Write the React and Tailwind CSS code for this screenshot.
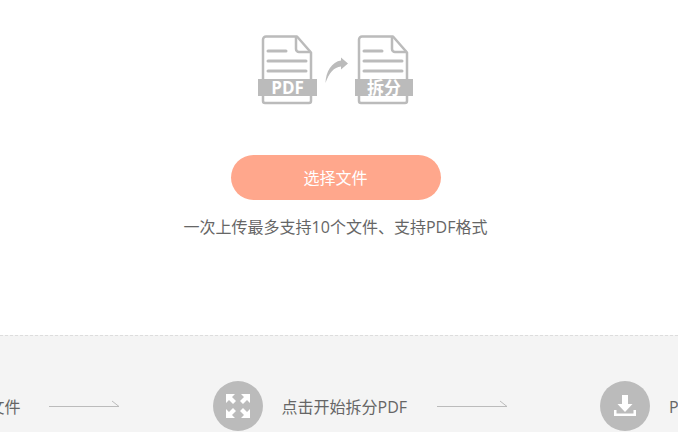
import React from "react";

const font = "font-['Open_Sans','Noto_Sans_CJK_SC',sans-serif]";

const DocIcon = ({ x, bannerX, bannerW, label, size }) => (
  <g>
    <path
      d={`M${x + 35} 36.5H${x + 4}a3 3 0 0 0-3 3V101a2 2 0 0 0 2 2h44a2 2 0 0 0 2-2V52.5Z`}
      fill="white"
      stroke="#bbb"
      strokeWidth="2.5"
      strokeLinejoin="round"
    />
    <path d={`M${x + 34} 37V49a3 3 0 0 0 3 3H${x + 49}`} fill="none" stroke="#bbb" strokeWidth="2.5" />
    <path d={`M${x + 6} 51H${x + 24}M${x + 6} 61H${x + 44}M${x + 6} 71H${x + 44}`} stroke="#bbb" strokeWidth="3" strokeLinecap="round" />
    <rect x={bannerX} y="79" width={bannerW} height="17" fill="#bbb" />
    <text
      x={bannerX + bannerW / 2}
      y="94"
      textAnchor="middle"
      fill="white"
      fontSize={size}
      fontWeight="700"
      fontFamily="'Open Sans', 'Noto Sans CJK SC', sans-serif"
    >
      {label}
    </text>
  </g>
);

const SplitIcon = () => (
  <svg viewBox="256 33 160 74" className="block h-[74px] w-[160px]">
    <DocIcon x={262} bannerX={258} bannerW={59} label="PDF" size={17} />
    <DocIcon x={358} bannerX={355} bannerW={58} label="拆分" size={17} />
    <path d="M325.5 83C325.5 72 332 61.5 341 60.5V57.5L348 63.5L341 69.5V66.5C334 67 329 73 325.5 83Z" fill="#bbb" />
  </svg>
);

const ExpandIcon = () => (
  <svg viewBox="0 0 50 50" className="h-[50px] w-[50px]" fill="white">
    <path d="M13 13H22L19 16L23 20L20 23L16 19L13 22Z" />
    <path d="M37 13H28L31 16L27 20L30 23L34 19L37 22Z" />
    <path d="M13 37H22L19 34L23 30L20 27L16 31L13 28Z" />
    <path d="M37 37H28L31 34L27 30L30 27L34 31L37 28Z" />
  </svg>
);

const DownloadIcon = () => (
  <svg viewBox="0 0 50 50" className="h-[50px] w-[50px]" fill="white">
    <path d="M22 14H28V23H32.5L25 31L17.5 23H22Z" />
    <path d="M14 29H16.5V32.5H33.5V29H36V35H14Z" />
  </svg>
);

const Step = ({ icon, text }) => (
  <div className="flex shrink-0 items-center gap-[19px]">
    <div className="h-[50px] w-[50px] shrink-0 rounded-full bg-[#bbb]">{icon}</div>
    <span className="mt-[2px] whitespace-nowrap text-base text-[#666]">{text}</span>
  </div>
);

const StepArrow = ({ className }) => (
  <svg viewBox="0 0 70 7" className={`mb-[5px] h-[7px] w-[70px] shrink-0 ${className}`} fill="none" stroke="#bbb">
    <path d="M0 6.5H70L63 1" />
  </svg>
);

export default function App() {
  return (
    <div className={`flex h-[432px] w-[678px] flex-col overflow-hidden bg-white ${font}`}>
      <div className="flex h-[335px] w-[671px] shrink-0 flex-col items-center pt-[33px]">
        <SplitIcon />
        <button className="mt-[48px] h-[45px] w-[210px] rounded-full bg-[#ffa78c] text-base text-white">
          选择文件
        </button>
        <p className="mt-[15px] whitespace-nowrap text-base text-[#666]">
          一次上传最多支持10个文件、支持PDF格式
        </p>
      </div>

      <div className="flex-1 border-t border-dashed border-[#ddd] bg-[#f4f4f4] pt-[45px]">
        <div className="ml-[-142px] flex w-max items-center">
          <Step icon={<ExpandIcon />} text="选择PDF文件" />
          <StepArrow className="ml-[28px] mr-[94px]" />
          <Step icon={<ExpandIcon />} text="点击开始拆分PDF" />
          <StepArrow className="ml-[30px] mr-[93px]" />
          <Step icon={<DownloadIcon />} text="PDF拆分完成" />
        </div>
      </div>
    </div>
  );
}
